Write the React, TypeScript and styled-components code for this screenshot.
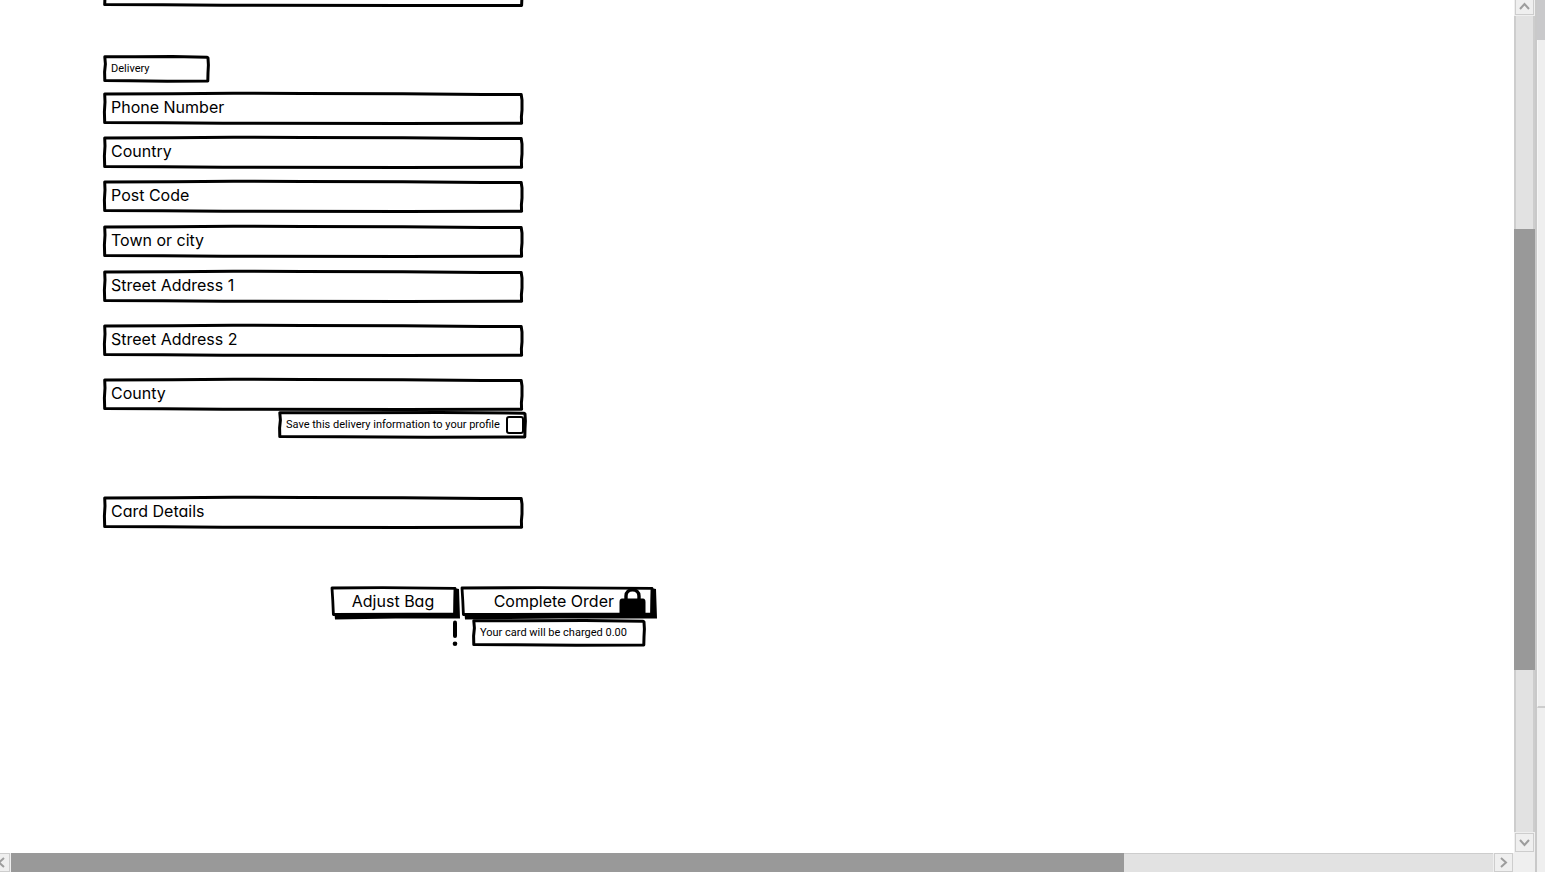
import React from "react";
import styled, { createGlobalStyle } from "styled-components";

const GlobalStyle = createGlobalStyle`
  *, *::before, *::after { box-sizing: border-box; }
  body { margin: 0; background: #fff; color: #000; overflow: hidden; }
  body, input, button { font-family: Inter, "Liberation Sans", sans-serif; font-feature-settings: "cv11"; }
`;

const smallFont = `Roboto, "Liberation Sans", sans-serif`;

const Shell = styled.div`
  display: grid;
  grid-template-columns: minmax(0, 1fr) 21px 10px;
  grid-template-rows: minmax(0, 1fr) 19px;
  height: 100vh;
  overflow: hidden;
`;

const Canvas = styled.main`
  overflow: hidden;
  padding-left: 103px;
`;

const Form = styled.form`
  display: flex;
  flex-direction: column;
  align-items: flex-start;
  max-width: 560px;
`;

const Outline = styled.svg`
  position: absolute;
  inset: 0;
  width: 100%;
  height: 100%;
  overflow: visible;
  pointer-events: none;
`;

const Frame = styled.div<{ $top?: number }>`
  position: relative;
  display: flex;
  align-items: center;
  width: 75%;
  height: 33px;
  margin-top: ${(p) => p.$top ?? 0}px;
  padding: 0 8px 4px;
  font-size: 16px;
  line-height: 20px;
  white-space: nowrap;
`;

const ClippedFrame = styled(Frame)`
  height: 7px;
  align-items: flex-end;
`;

const Heading = styled.h2`
  position: relative;
  display: flex;
  align-items: center;
  width: 107px;
  height: 28px;
  margin: 48px 0 0;
  padding: 0 8px;
  font-family: ${smallFont};
  font-size: 11px;
  font-weight: 400;
  line-height: 16px;
`;

const Input = styled.input`
  flex: 1;
  min-width: 0;
  height: 20px;
  margin-left: 8px;
  padding: 0;
  border: 0;
  outline: 0;
  background: transparent;
  font-size: 16px;
`;

const SaveLabel = styled.label`
  position: relative;
  display: flex;
  align-items: center;
  justify-content: space-between;
  width: 249px;
  height: 28px;
  margin-left: 175px;
  padding: 0 3px 0 8px;
  font-family: ${smallFont};
  font-size: 11px;
  line-height: 16px;
  white-space: nowrap;
`;

const Checkbox = styled.input`
  appearance: none;
  flex: none;
  width: 18px;
  height: 18px;
  margin: 0;
  border: 2px solid #000;
  border-radius: 3px;
  background: #fff;
  &:checked { background: #000; }
`;

const Actions = styled.div`
  display: flex;
  gap: 1px;
  height: 32px;
  margin: 58px 0 0 228px;
`;

const Button = styled.button<{ $width: number; $icon?: boolean }>`
  position: relative;
  display: flex;
  align-items: center;
  justify-content: ${(p) => (p.$icon ? "flex-end" : "center")};
  gap: 5px;
  width: ${(p) => p.$width}px;
  height: 32px;
  padding: 0 ${(p) => (p.$icon ? 11 : 5)}px 4px 0;
  border: 0;
  background: transparent;
  color: #000;
  font-size: 16px;
  line-height: 20px;
  white-space: nowrap;
  cursor: pointer;
`;

const Notice = styled.div`
  display: flex;
  margin-left: 349px;
  gap: 14px;
`;

const NoticeText = styled.p`
  position: relative;
  display: flex;
  align-items: center;
  width: 174px;
  height: 28px;
  margin: 0;
  padding: 0 8px;
  font-family: ${smallFont};
  font-size: 11px;
  line-height: 16px;
  white-space: nowrap;
`;

const VerticalBar = styled.div`
  display: flex;
  flex-direction: column;
  background: #efefef;
`;

const VerticalTrack = styled.div`
  flex: 1;
  display: grid;
  grid-template-rows: 213fr 441fr 162fr;
  background: #e2e2e2;
  border-left: 2px solid #cdcdcd;
  border-right: 2px solid #cdcdcd;
`;

const VerticalThumb = styled.div`
  grid-row: 2;
  margin: 0 -2px;
  background: #999;
`;

const ScrollButton = styled.button<{ $w: number; $h: number }>`
  display: flex;
  align-items: center;
  justify-content: center;
  flex: none;
  width: ${(p) => p.$w}px;
  height: ${(p) => p.$h}px;
  padding: 0;
  border: 1px solid #cdcdcd;
  background: #efefef;
  overflow: hidden;
`;

const UpButton = styled(ScrollButton)`
  margin: 0 1px 1px;
  padding-bottom: 3px;
  border-top: 0;
`;

const DownButton = styled(ScrollButton)`
  margin: 1px;
`;

const LeftButton = styled(ScrollButton)`
  margin-right: 1px;
  border-left: 0;
`;

const RightButton = styled(ScrollButton)`
  margin: 0 1px;
`;

const HorizontalBar = styled.div`
  display: flex;
  background: #efefef;
`;

const HorizontalTrack = styled.div`
  flex: 1;
  display: grid;
  grid-template-columns: 1113fr 369fr;
  background: #e2e2e2;
  border-top: 1px solid #cdcdcd;
`;

const HorizontalThumb = styled.div`
  margin-top: -1px;
  background: #999;
`;

const Corner = styled.div`
  background: #efefef;
`;

const OuterBar = styled.div`
  grid-column: 3;
  grid-row: 1 / 3;
  display: grid;
  grid-template-rows: 40px 668fr 164fr;
  background: #efefef;
  border-left: 2px solid #c9c9c9;
`;

const OuterThumb = styled.div`
  background: #c9c9cb;
`;

const OuterPane = styled.div`
  border-left: 1px solid #f6f6f6;
  border-bottom: 2px solid #cdcdcd;
`;

function SketchFrame() {
  return (
    <Outline viewBox="0 0 420 33" preserveAspectRatio="none" aria-hidden="true">
      <path
        d="M1.7 2 L70 1.8 L130 1.3 L200 1.5 L300 1.8 L380 2.5 L418.2 2.5 L419 8 L419 18 L418.4 25 L418.6 31.2 L300 31.5 L120 31.3 L60 30.7 L1.7 30.6 L1.4 20 L2 10 Z"
        fill="none"
        stroke="#000"
        strokeWidth="3"
        strokeLinejoin="round"
        vectorEffect="non-scaling-stroke"
      />
    </Outline>
  );
}

function SmallSketchFrame({ width }: { width: number }) {
  const r = width - 2;
  return (
    <Outline viewBox={`0 0 ${width} 28`} aria-hidden="true">
      <path
        d={`M1.8 1.8 L${width * 0.3} 1.7 L${width * 0.65} 1.4 L${r - 1} 2.2 L${r} 3 L${r + 0.4} 10 L${r} 18 L${r - 0.2} 26 L${width * 0.6} 26.2 L${width * 0.25} 25.8 L1.8 25.6 L1.6 17 L2.4 9 Z`}
        fill="none"
        stroke="#000"
        strokeWidth="3"
        strokeLinejoin="round"
      />
    </Outline>
  );
}

function ButtonFrame({ width }: { width: number }) {
  const r = width - 5;
  return (
    <Outline viewBox={`0 0 ${width} 32`} aria-hidden="true">
      <path
        d={`M${r - 1} 1 L${width - 1} 2 L${width} 31.6 L${width / 2} 31.6 L4 32.4 L3.5 27 L${r - 1} 27 Z`}
        fill="#000"
      />
      <path
        d={`M1 1 L${width * 0.4} 0.6 L${r} 1.4 L${r - 0.3} 14 L${r - 0.5} 27.2 L${width * 0.6} 27.1 L2.4 27.5 L1.8 14 Z`}
        fill="#fff"
        stroke="#000"
        strokeWidth="2.8"
        strokeLinejoin="round"
      />
    </Outline>
  );
}

const ButtonText = styled.span`
  position: relative;
`;

const LockIcon = styled.svg`
  position: relative;
  flex: none;
`;

function Chevron({ d, w, h }: { d: string; w: number; h: number }) {
  return (
    <svg width={w} height={h} viewBox={`0 0 ${w} ${h}`} aria-hidden="true">
      <path d={d} fill="none" stroke="#9d9d9d" strokeWidth="2" />
    </svg>
  );
}

function Field({ id, label, top }: { id: string; label: string; top: number }) {
  return (
    <Frame $top={top}>
      <SketchFrame />
      <label htmlFor={id}>{label}</label>
      <Input id={id} name={id} type="text" />
    </Frame>
  );
}

const addressFields = [
  { id: "phone", label: "Phone Number", top: 9 },
  { id: "country", label: "Country", top: 11 },
  { id: "postcode", label: "Post Code", top: 11 },
  { id: "town", label: "Town or city", top: 12 },
  { id: "street1", label: "Street Address 1", top: 12 },
  { id: "street2", label: "Street Address 2", top: 21 },
  { id: "county", label: "County", top: 21 },
];

export default function App() {
  return (
    <>
      <GlobalStyle />
      <Shell>
        <Canvas>
          <Form onSubmit={(e) => e.preventDefault()}>
            <ClippedFrame>
              <Outline viewBox="0 0 420 7" preserveAspectRatio="none" aria-hidden="true">
                <path
                  d="M2 -4 L1.7 4.6 L60 4.7 L120 5.3 L300 5.5 L418.6 5.5 L419 -4"
                  fill="none"
                  stroke="#000"
                  strokeWidth="3"
                  strokeLinejoin="round"
                  vectorEffect="non-scaling-stroke"
                />
              </Outline>
            </ClippedFrame>
            <Heading>
              <SmallSketchFrame width={107} />
              Delivery
            </Heading>
            {addressFields.map((f) => (
              <Field key={f.id} {...f} />
            ))}
            <SaveLabel>
              <SmallSketchFrame width={249} />
              Save this delivery information to your profile
              <Checkbox type="checkbox" name="save" />
            </SaveLabel>
            <Field id="card" label="Card Details" top={57} />
            <Actions>
              <Button type="button" $width={129}>
                <ButtonFrame width={129} />
                <ButtonText>Adjust Bag</ButtonText>
              </Button>
              <Button type="submit" $width={196} $icon>
                <ButtonFrame width={196} />
                <ButtonText>Complete Order</ButtonText>
                <LockIcon width="27" height="28" viewBox="0 0 27 28" aria-hidden="true">
                  <path d="M7 13 V9 C7 0.6 20 0.6 20 9 V13" fill="none" stroke="#000" strokeWidth="3.4" />
                  <path d="M3 11.5 H24 Q26.5 11.5 26.5 15 V28 H0.5 V15 Q0.5 11.5 3 11.5 Z" />
                </LockIcon>
              </Button>
            </Actions>
            <Notice>
              <svg width="6" height="28" viewBox="0 0 6 28" aria-hidden="true">
                <path d="M3 3.6 V17" stroke="#000" strokeWidth="4" strokeLinecap="round" />
                <circle cx="3" cy="24.8" r="2.3" />
              </svg>
              <NoticeText>
                <SmallSketchFrame width={174} />
                Your card will be charged 0.00
              </NoticeText>
            </Notice>
          </Form>
        </Canvas>
        <VerticalBar>
          <UpButton type="button" aria-label="Scroll up" $w={19} $h={15}>
            <Chevron w={11} h={8} d="M1 7 L5.5 2 L10 7" />
          </UpButton>
          <VerticalTrack>
            <VerticalThumb />
          </VerticalTrack>
          <DownButton type="button" aria-label="Scroll down" $w={19} $h={19}>
            <Chevron w={11} h={8} d="M1 1 L5.5 6 L10 1" />
          </DownButton>
        </VerticalBar>
        <OuterBar>
          <OuterThumb />
          <OuterPane />
        </OuterBar>
        <HorizontalBar>
          <LeftButton type="button" aria-label="Scroll left" $w={10} $h={19}>
            <Chevron w={9} h={11} d="M4 1 L-1 5.5 L4 10" />
          </LeftButton>
          <HorizontalTrack>
            <HorizontalThumb />
          </HorizontalTrack>
          <RightButton type="button" aria-label="Scroll right" $w={19} $h={19}>
            <Chevron w={8} h={11} d="M1 1 L6 5.5 L1 10" />
          </RightButton>
        </HorizontalBar>
        <Corner />
      </Shell>
    </>
  );
}
